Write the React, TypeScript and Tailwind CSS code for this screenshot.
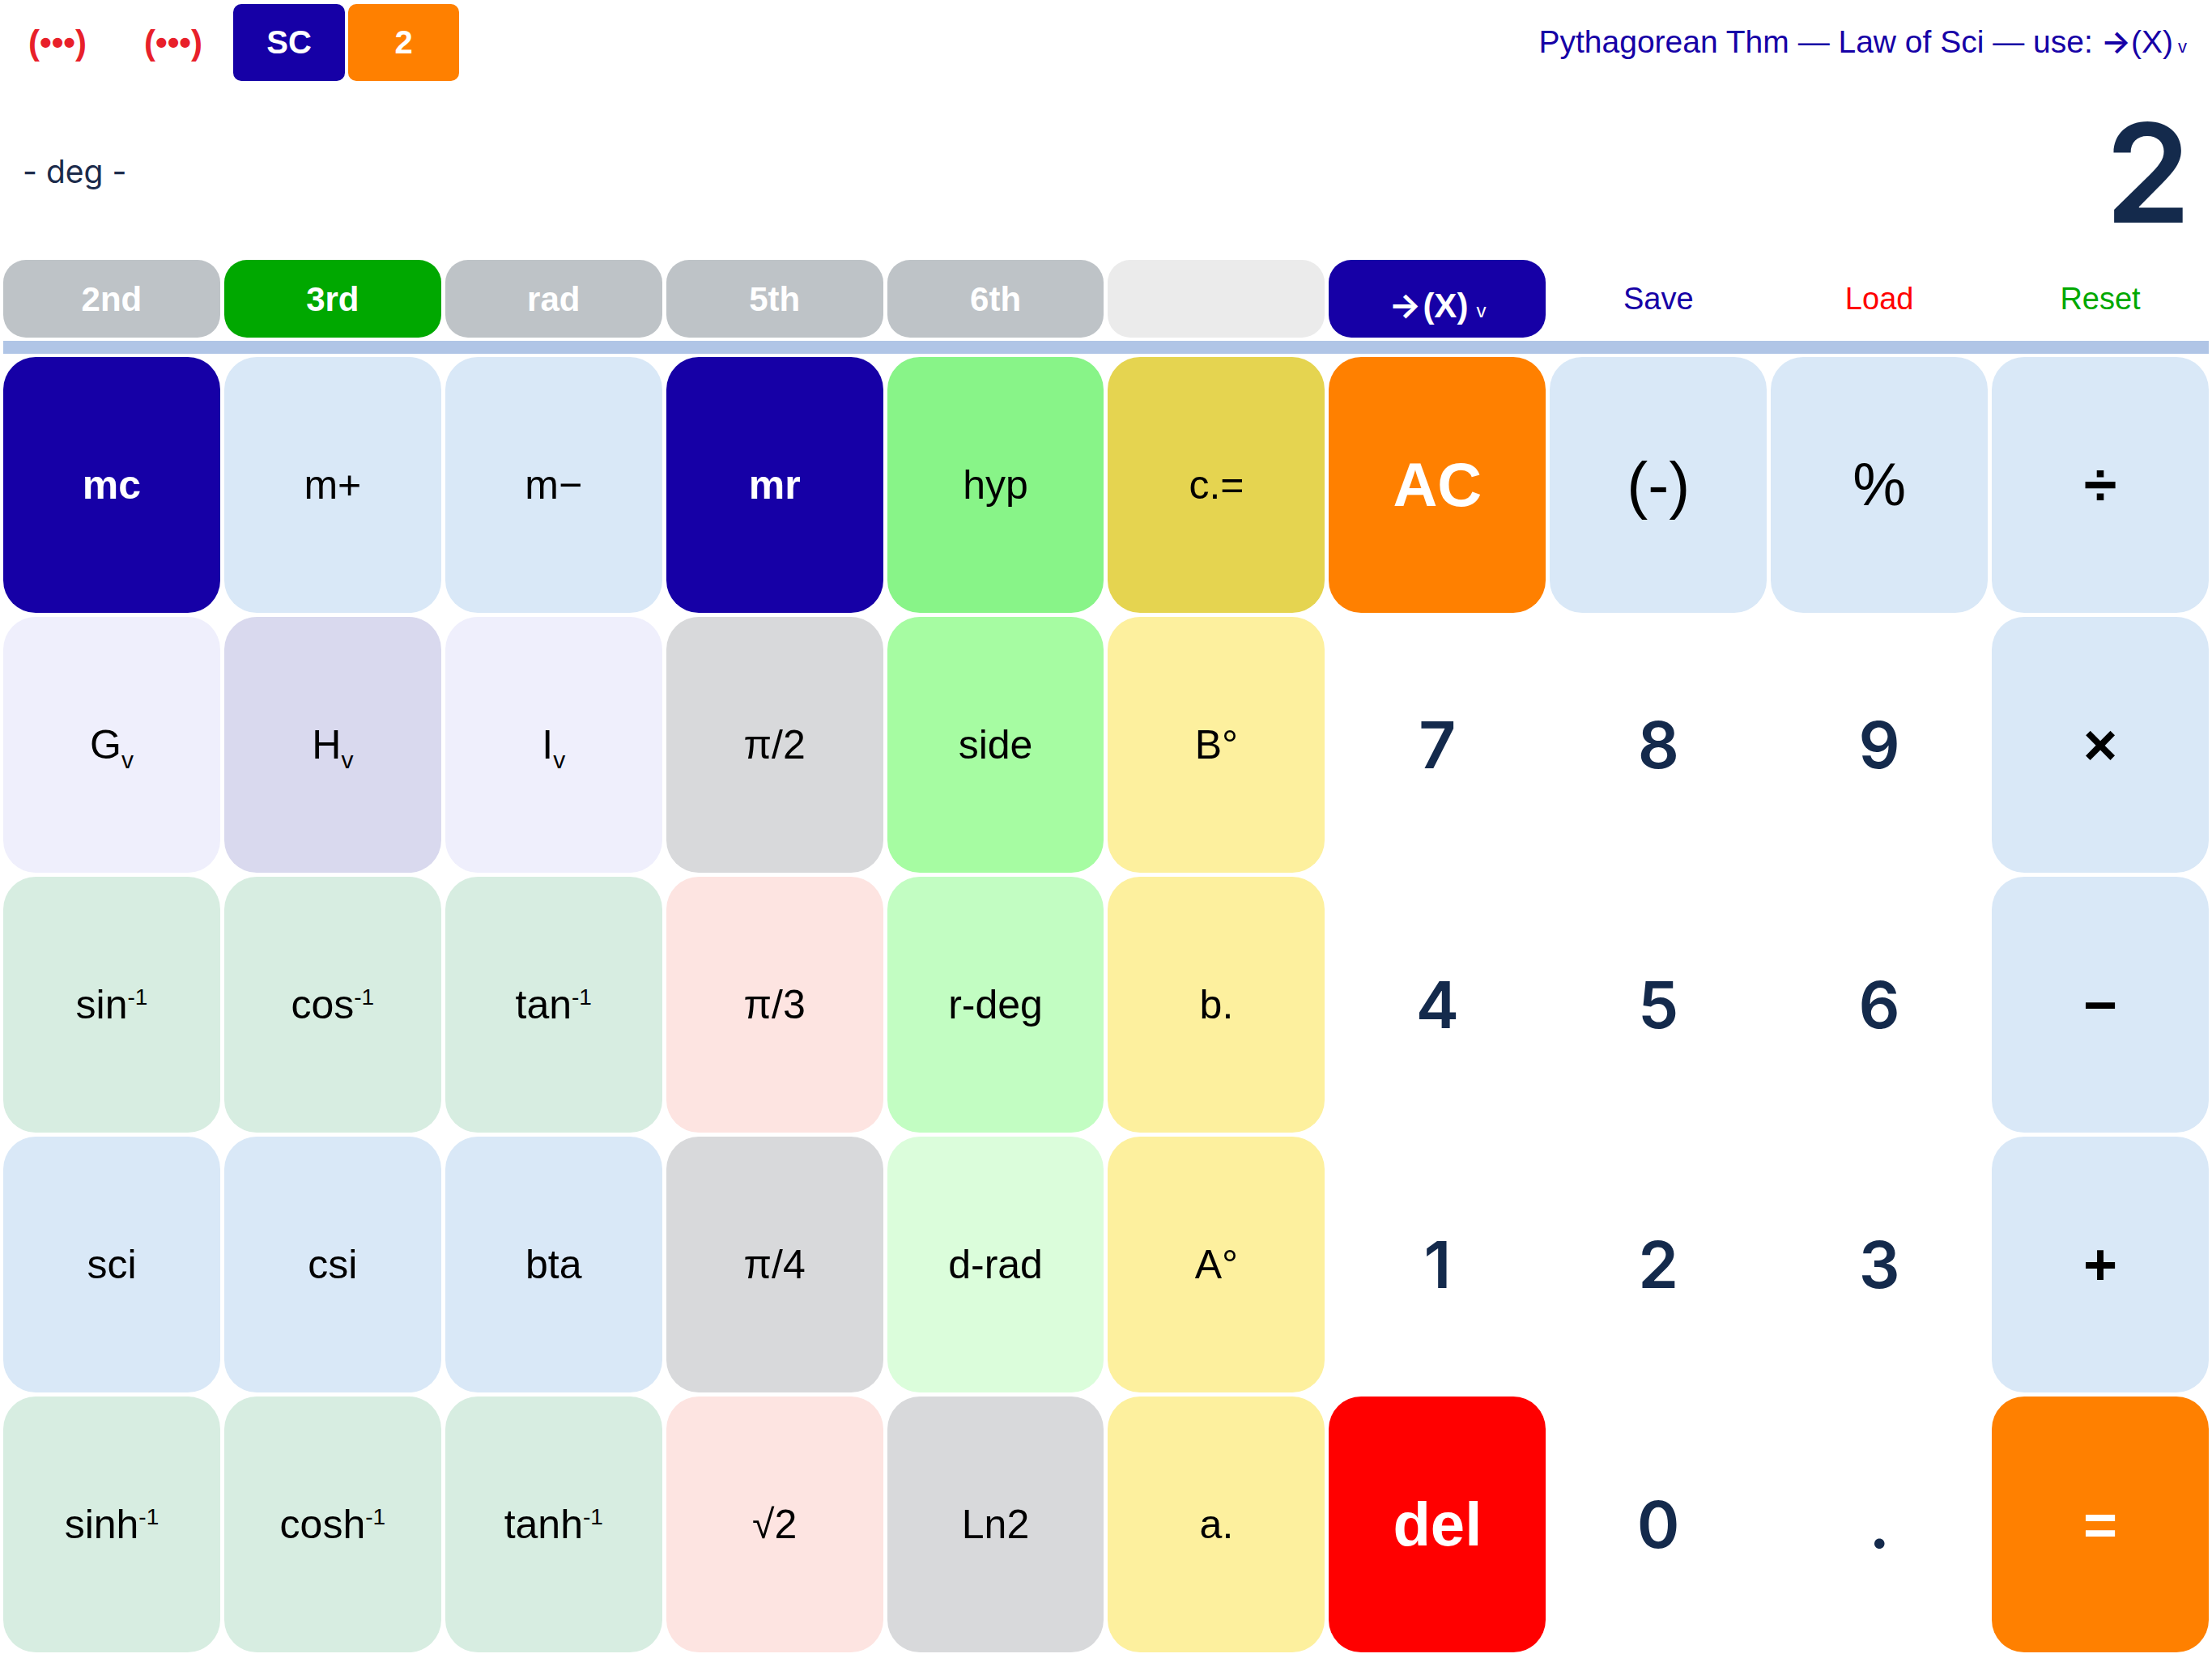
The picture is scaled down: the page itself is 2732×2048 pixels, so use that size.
import type { ReactNode } from 'react'

type Key = {
  label: ReactNode
  cls: string
}

const inv = (base: string) => (
  <>
    {base}
    <span className="relative -top-[17px] text-[28px]">-1</span>
  </>
)

const sub = (base: string) => (
  <>
    {base}
    <span className="relative top-[12px] text-[30px]">v</span>
  </>
)

const fn = 'text-[50px] text-black'
const digit = "font-['Inter'] font-semibold text-[80px] text-[#142a4c]"
const op = 'text-[72px] font-bold text-black bg-[#d9e8f7]'

const keys: Key[] = [
  // row 1
  { label: 'mc', cls: 'bg-[#1600a6] text-white font-bold text-[50px]' },
  { label: 'm+', cls: `bg-[#d9e8f7] ${fn}` },
  { label: 'm−', cls: `bg-[#d9e8f7] ${fn}` },
  { label: 'mr', cls: 'bg-[#1600a6] text-white font-bold text-[50px]' },
  { label: 'hyp', cls: `bg-[#88f488] ${fn}` },
  { label: 'c.=', cls: `bg-[#e5d450] ${fn}` },
  { label: 'AC', cls: 'bg-[#ff8000] text-white font-bold text-[76px]' },
  { label: '(-)', cls: 'bg-[#d9e8f7] text-black text-[78px]' },
  { label: '%', cls: 'bg-[#d9e8f7] text-black text-[74px]' },
  { label: '÷', cls: 'bg-[#d9e8f7] text-black font-bold text-[74px]' },
  // row 2
  { label: sub('G'), cls: `bg-[#efeffc] ${fn}` },
  { label: sub('H'), cls: `bg-[#d9d9ee] ${fn}` },
  { label: sub('I'), cls: `bg-[#efeffc] ${fn}` },
  { label: 'π/2', cls: `bg-[#d8d9db] ${fn}` },
  { label: 'side', cls: `bg-[#a6fca2] ${fn}` },
  { label: 'B°', cls: `bg-[#fdf09e] ${fn}` },
  { label: '7', cls: digit },
  { label: '8', cls: digit },
  { label: '9', cls: digit },
  { label: '×', cls: op },
  // row 3
  { label: inv('sin'), cls: `bg-[#d7ede1] ${fn}` },
  { label: inv('cos'), cls: `bg-[#d7ede1] ${fn}` },
  { label: inv('tan'), cls: `bg-[#d7ede1] ${fn}` },
  { label: 'π/3', cls: `bg-[#fde4e1] ${fn}` },
  { label: 'r-deg', cls: `bg-[#c2fdc2] ${fn}` },
  { label: 'b.', cls: `bg-[#fdf09e] ${fn}` },
  { label: '4', cls: digit },
  { label: '5', cls: digit },
  { label: '6', cls: digit },
  { label: '−', cls: op },
  // row 4
  { label: 'sci', cls: `bg-[#d9e8f7] ${fn}` },
  { label: 'csi', cls: `bg-[#d9e8f7] ${fn}` },
  { label: 'bta', cls: `bg-[#d9e8f7] ${fn}` },
  { label: 'π/4', cls: `bg-[#d8d9db] ${fn}` },
  { label: 'd-rad', cls: `bg-[#dbfddb] ${fn}` },
  { label: 'A°', cls: `bg-[#fdf09e] ${fn}` },
  { label: '1', cls: digit },
  { label: '2', cls: digit },
  { label: '3', cls: digit },
  { label: '+', cls: op },
  // row 5
  { label: inv('sinh'), cls: `bg-[#d7ede1] ${fn}` },
  { label: inv('cosh'), cls: `bg-[#d7ede1] ${fn}` },
  { label: inv('tanh'), cls: `bg-[#d7ede1] ${fn}` },
  { label: '√2', cls: `bg-[#fde4e1] ${fn}` },
  { label: 'Ln2', cls: `bg-[#d8d9db] ${fn}` },
  { label: 'a.', cls: `bg-[#fdf09e] ${fn}` },
  { label: 'del', cls: 'bg-[#ff0000] text-white font-bold text-[76px]' },
  { label: '0', cls: digit },
  { label: '.', cls: digit },
  { label: '=', cls: 'bg-[#ff8000] text-white font-bold text-[72px]' },
]

const modes = [
  { label: '2nd', cls: 'bg-[#bec3c7]' },
  { label: '3rd', cls: 'bg-[#00a800]' },
  { label: 'rad', cls: 'bg-[#bec3c7]' },
  { label: '5th', cls: 'bg-[#bec3c7]' },
  { label: '6th', cls: 'bg-[#bec3c7]' },
  { label: '', cls: 'bg-[#ebebeb]' },
]

export default function App() {
  return (
    <div className="w-[2732px] h-[2048px] bg-white flex flex-col font-['Liberation_Sans',Arial,sans-serif]">
      {/* Top bar */}
      <div className="h-[104px] flex items-center pl-[32px] pr-[31px]">
        <span className="w-[78px] text-center text-[42px] font-bold text-[#e8202a]">(•••)</span>
        <span className="ml-[65px] w-[78px] text-center text-[42px] font-bold text-[#e8202a]">(•••)</span>
        <div className="ml-[35px] flex gap-[4px]">
          <div className="w-[138px] h-[95px] rounded-[10px] bg-[#1600a6] text-white font-bold text-[40px] flex items-center justify-center">
            SC
          </div>
          <div className="w-[137px] h-[95px] rounded-[10px] bg-[#ff8000] text-white font-bold text-[40px] flex items-center justify-center">
            2
          </div>
        </div>
        <div className="ml-auto flex items-baseline text-[39px] text-[#1600a6] whitespace-nowrap">
          Pythagorean Thm — Law of Sci — use:
          <span className="ml-[10px] font-['Inter'] font-semibold">→</span>
          (X)
          <span className="ml-[6px] text-[22px]">v</span>
        </div>
      </div>

      {/* Display */}
      <div className="h-[217px] flex items-center justify-between pl-[28px] pr-[26px] font-['Inter',sans-serif] text-[#142a4c]">
        <span className="text-[39px] text-[#1c2b4b]">- deg -</span>
        <span className="text-[170px] font-semibold leading-none">2</span>
      </div>

      {/* Mode row */}
      <div className="h-[96px] grid grid-cols-10 gap-x-[5px] px-[4px]">
        {modes.map((m, i) => (
          <div
            key={i}
            className={`${m.cls} rounded-[28px] flex items-center justify-center text-white font-bold text-[42px]`}
          >
            {m.label}
          </div>
        ))}
        <div className="bg-[#1600a6] rounded-[28px] flex items-baseline justify-center pt-[24px] text-white font-bold text-[42px]">
          <span className="font-['Inter'] font-bold mr-[2px]">→</span>
          (X)
          <span className="ml-[10px] text-[24px] font-normal">v</span>
        </div>
        <div className="flex items-center justify-center text-[38px] text-[#1600a6]">Save</div>
        <div className="flex items-center justify-center text-[38px] text-[#ff0000]">Load</div>
        <div className="flex items-center justify-center text-[38px] text-[#00a800]">Reset</div>
      </div>

      <div className="mt-[4px] mx-[4px] h-[16px] bg-[#b0c5e6]" />

      {/* Keypad */}
      <div className="mt-[4px] grid grid-cols-10 grid-rows-[repeat(5,316px)] gap-[5px] px-[4px]">
        {keys.map((k, i) => (
          <div key={i} className={`${k.cls} rounded-[40px] flex items-center justify-center`}>
            <span className="leading-none">{k.label}</span>
          </div>
        ))}
      </div>
    </div>
  )
}
